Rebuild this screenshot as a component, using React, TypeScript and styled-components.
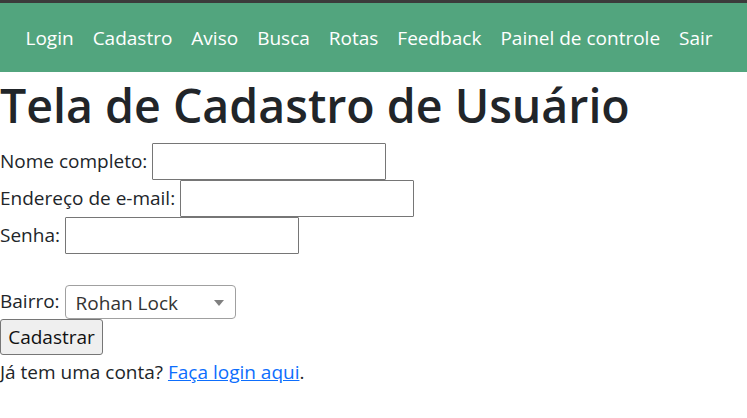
import styled, { createGlobalStyle } from 'styled-components';

const GlobalStyle = createGlobalStyle`
  body {
    margin: 0;
    font-family: "Open Sans", "Noto Sans", sans-serif;
    font-size: 19px;
    line-height: 1.5;
    color: #212529;
    background: #fff;
  }
`;

const NavBar = styled.nav`
  border-top: 3px solid #3b3b3b;
  background: #52a57e;
  height: 72px;
  display: flex;
  align-items: center;
  padding: 0 0 0 16px;
  box-sizing: border-box;
`;

const NavLink = styled.a`
  color: #fff;
  text-decoration: none;
  padding: 0 9.5px;
  font-size: 19px;
  margin-top: 2px;
`;

const Title = styled.h1`
  margin: 6px 0 9px;
  font-size: 46.5px;
  font-weight: 600;
  line-height: 1.2;
`;

const Form = styled.form`
  display: flex;
  flex-direction: column;
  align-items: flex-start;
`;

const Row = styled.div<{ $spaceTop?: number }>`
  display: flex;
  align-items: center;
  gap: 5px;
  margin-top: ${(p) => p.$spaceTop ?? 0}px;
`;

const Label = styled.label`
  white-space: nowrap;
`;

const TextInput = styled.input`
  width: 234px;
  height: 37px;
  box-sizing: border-box;
  border: 1px solid #767676;
  border-radius: 1px;
  font: inherit;
  padding: 1px 3px;
`;

const SelectBox = styled.div`
  position: relative;
  display: inline-block;
  margin-top: 2px;

  &::after {
    content: '';
    position: absolute;
    right: 12px;
    top: 15px;
    border-left: 5px solid transparent;
    border-right: 5px solid transparent;
    border-top: 6px solid #808080;
    pointer-events: none;
  }
`;

const Select = styled.select`
  appearance: none;
  width: 171px;
  height: 34px;
  box-sizing: border-box;
  border: 1px solid #a0a0a0;
  border-radius: 4px;
  background: #fff;
  font: inherit;
  color: #333;
  padding: 2px 10px 0;
`;

const Button = styled.button`
  width: 103px;
  height: 36px;
  box-sizing: border-box;
  background: #efefef;
  border: 1px solid #767676;
  border-radius: 3px;
  font: inherit;
  color: #111;
  padding: 0 6px;
`;

const Footer = styled.p`
  margin: 3px 0 0;
`;

const Link = styled.a`
  color: #0d6efd;
  text-decoration: underline;
`;

const links = ['Login', 'Cadastro', 'Aviso', 'Busca', 'Rotas', 'Feedback', 'Painel de controle', 'Sair'];

export default function App() {
  return (
    <>
      <GlobalStyle />
      <NavBar>
        {links.map((l) => (
          <NavLink key={l} href="#">
            {l}
          </NavLink>
        ))}
      </NavBar>
      <Title>Tela de Cadastro de Usuário</Title>
      <Form onSubmit={(e) => e.preventDefault()}>
        <Row>
          <Label htmlFor="nome">Nome completo:</Label>
          <TextInput id="nome" type="text" />
        </Row>
        <Row>
          <Label htmlFor="email">Endereço de e-mail:</Label>
          <TextInput id="email" type="email" />
        </Row>
        <Row>
          <Label htmlFor="senha">Senha:</Label>
          <TextInput id="senha" type="password" />
        </Row>
        <Row $spaceTop={29}>
          <Label htmlFor="bairro">Bairro:</Label>
          <SelectBox>
            <Select id="bairro" defaultValue="Rohan Lock">
              <option>Rohan Lock</option>
            </Select>
          </SelectBox>
        </Row>
        <Button type="submit">Cadastrar</Button>
      </Form>
      <Footer>
        Já tem uma conta? <Link href="#">Faça login aqui</Link>.
      </Footer>
    </>
  );
}
